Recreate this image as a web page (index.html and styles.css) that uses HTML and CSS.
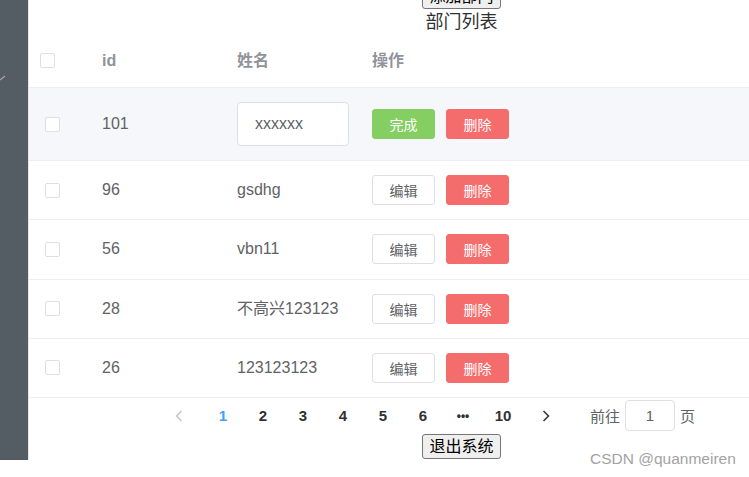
FILE: index.html
```html
<!DOCTYPE html>
<html lang="zh-CN">
<head>
  <meta charset="UTF-8" />
  <title>部门列表</title>
  <link rel="stylesheet" href="styles.css">
</head>
<body>
  <div class="layout">
    <aside class="aside">
      <svg class="aside-mark" width="8" height="10" viewBox="0 0 8 10">
        <path d="M0 8 L5 4" stroke="#a3a8ad" stroke-width="1.2" fill="none"/>
      </svg>
    </aside>

    <div class="main">
      <div class="top">
        <button class="sys-btn add-btn">添加部门</button>
        <div class="title">部门列表</div>
      </div>

      <div class="table">
        <div class="row head">
          <div class="cell"><span class="check check-head"></span></div>
          <div class="cell">id</div>
          <div class="cell">姓名</div>
          <div class="cell">操作</div>
        </div>

        <div class="row editing">
          <div class="cell"><span class="check"></span></div>
          <div class="cell">101</div>
          <div class="cell"><input class="name-input" type="text" value="xxxxxx"></div>
          <div class="cell ops">
            <button class="btn btn-success">完成</button>
            <button class="btn btn-danger">删除</button>
          </div>
        </div>

        <div class="row">
          <div class="cell"><span class="check"></span></div>
          <div class="cell">96</div>
          <div class="cell">gsdhg</div>
          <div class="cell ops">
            <button class="btn">编辑</button>
            <button class="btn btn-danger">删除</button>
          </div>
        </div>

        <div class="row">
          <div class="cell"><span class="check"></span></div>
          <div class="cell">56</div>
          <div class="cell">vbn11</div>
          <div class="cell ops">
            <button class="btn">编辑</button>
            <button class="btn btn-danger">删除</button>
          </div>
        </div>

        <div class="row">
          <div class="cell"><span class="check"></span></div>
          <div class="cell">28</div>
          <div class="cell">不高兴123123</div>
          <div class="cell ops">
            <button class="btn">编辑</button>
            <button class="btn btn-danger">删除</button>
          </div>
        </div>

        <div class="row">
          <div class="cell"><span class="check"></span></div>
          <div class="cell">26</div>
          <div class="cell">123123123</div>
          <div class="cell ops">
            <button class="btn">编辑</button>
            <button class="btn btn-danger">删除</button>
          </div>
        </div>
      </div>

      <div class="pager">
        <span class="pg-prev">
          <svg width="8" height="12" viewBox="0 0 8 12"><path d="M6.5 1 L1.5 6 L6.5 11" stroke="#c0c4cc" stroke-width="1.5" fill="none"/></svg>
        </span>
        <span class="pg-num active">1</span>
        <span class="pg-num">2</span>
        <span class="pg-num">3</span>
        <span class="pg-num">4</span>
        <span class="pg-num">5</span>
        <span class="pg-num">6</span>
        <span class="pg-num more">•••</span>
        <span class="pg-num">10</span>
        <span class="pg-next">
          <svg width="8" height="12" viewBox="0 0 8 12"><path d="M1.5 1 L6.5 6 L1.5 11" stroke="#303133" stroke-width="1.5" fill="none"/></svg>
        </span>
        <span class="jump">前往 <input class="jump-input" type="text" value="1"> 页</span>
      </div>

      <div class="bottom">
        <button class="sys-btn">退出系统</button>
      </div>
    </div>
  </div>

  <div class="watermark">CSDN @quanmeiren</div>
</body>
</html>
```

FILE: styles.css
```css
body {
  margin: 0;
  padding: 0;
  overflow: hidden;
  font-family: "Liberation Sans", "Noto Sans CJK SC", sans-serif;
  background: #fff;
}

.layout {
  display: flex;
  height: 460px;
  width: 900px;
}

.aside {
  width: 28px;
  flex-shrink: 0;
  background: #545c64;
  border-right: 1px solid #e6e6e6;
  padding-top: 72px;
}

.aside-mark {
  display: block;
}

.main {
  width: 865px;
  display: flex;
  flex-direction: column;
}

.top {
  text-align: center;
  margin-top: -16px;
}

.sys-btn {
  font-family: "Liberation Sans", "Noto Sans CJK SC", sans-serif;
  font-size: 16px;
  height: 25px;
  line-height: 19px;
  padding: 1px 6px;
  background: #efefef;
  border: 1px solid #767676;
  border-radius: 3px;
  color: #000;
}

.title {
  font-size: 18px;
  line-height: 26px;
  color: #303133;
}

.table {
  font-size: 16px;
  line-height: 20px;
  color: #606266;
}

.row {
  display: grid;
  grid-template-columns: 73px 135px 135px 1fr;
  align-items: center;
  box-sizing: border-box;
  height: 59.25px;
  border-bottom: 1px solid #ebeef5;
}

.row.head {
  height: 53px;
  padding-bottom: 1px;
  color: #909399;
  font-weight: bold;
}

.row.editing {
  height: 73px;
  background: #f5f7fa;
}

.cell {
  display: flex;
  align-items: center;
}

.check {
  display: inline-block;
  width: 15px;
  height: 15px;
  box-sizing: border-box;
  border: 1px solid #dcdfe6;
  border-radius: 2px;
  background: #fff;
  margin-left: 16px;
}

.check-head {
  margin-left: 11px;
}

.name-input {
  width: 112px;
  height: 44px;
  box-sizing: border-box;
  border: 1px solid #dcdfe6;
  border-radius: 4px;
  padding: 0 17px;
  font-family: "Liberation Sans", sans-serif;
  font-size: 16px;
  color: #606266;
  outline: none;
  background: #fff;
}

.ops {
  gap: 11px;
}

.btn {
  width: 63px;
  height: 30px;
  padding: 0;
  font-family: "Liberation Sans", "Noto Sans CJK SC", sans-serif;
  font-size: 14px;
  color: #606266;
  background: #fff;
  border: 1px solid #dcdfe6;
  border-radius: 3px;
}

.btn-success {
  background: #85ce61;
  border-color: #85ce61;
  color: #fff;
}

.btn-danger {
  background: #f56c6c;
  border-color: #f56c6c;
  color: #fff;
}

.pager {
  display: flex;
  align-items: center;
  height: 35px;
  padding-left: 126px;
  font-size: 15px;
  font-weight: bold;
  color: #303133;
}

.pg-prev, .pg-next {
  display: flex;
  justify-content: center;
  align-items: center;
  height: 30px;
}

.pg-prev {
  width: 48px;
}

.pg-next {
  width: 46px;
}

.pg-num {
  width: 40px;
  text-align: center;
  line-height: 30px;
}

.pg-num.active {
  color: #409eff;
}

.pg-num.more {
  font-size: 12px;
  letter-spacing: 0;
}

.jump {
  margin-left: 21px;
  font-weight: normal;
  color: #606266;
  font-size: 15px;
  display: flex;
  align-items: center;
  gap: 5px;
}

.jump-input {
  width: 50px;
  height: 31px;
  box-sizing: border-box;
  border: 1px solid #dcdfe6;
  border-radius: 4px;
  text-align: center;
  font-family: "Liberation Sans", sans-serif;
  font-size: 15px;
  color: #606266;
  outline: none;
}

.bottom {
  text-align: center;
  margin-top: 1px;
}

.watermark {
  position: absolute;
  left: 590px;
  top: 450px;
  font-size: 15.5px;
  color: #a3a3a3;
  font-family: "Liberation Sans", sans-serif;
}
```
